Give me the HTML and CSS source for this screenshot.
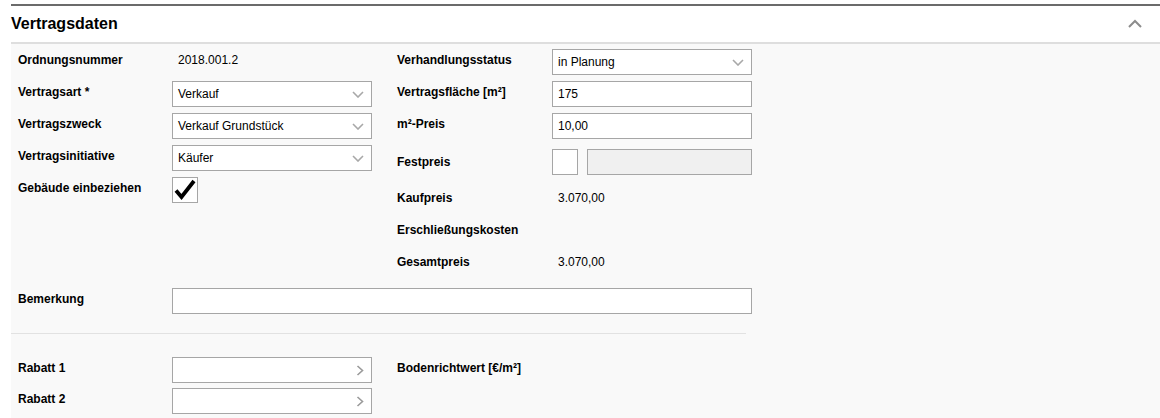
FILE: index.html
```html
<!DOCTYPE html>
<html lang="de">
<head>
    <meta charset="UTF-8">
    <meta name="viewport" content="width=device-width, initial-scale=1.0">
    <title>Vertragsdaten</title>
    <link rel="stylesheet" href="styles.css">
</head>
<body>
    <section class="panel">
        <header class="panel-head">
            <h2>Vertragsdaten</h2>
            <svg class="collapse" width="14" height="9" viewBox="0 0 14 9">
                <polyline points="1,8 7,2 13,8" fill="none" stroke="#8c8c8c" stroke-width="2"/>
            </svg>
        </header>
        <div class="panel-body">
            <div class="cols">
                <div class="col">
                    <div class="row">
                        <label>Ordnungsnummer</label>
                        <span class="value">2018.001.2</span>
                    </div>
                    <div class="row">
                        <label>Vertragsart *</label>
                        <div class="field select">
                            <span>Verkauf</span>
                            <svg width="12" height="7" viewBox="0 0 12 7"><polyline points="1,1 6,6 11,1" fill="none" stroke="#a8a8a8" stroke-width="1.6"/></svg>
                        </div>
                    </div>
                    <div class="row">
                        <label>Vertragszweck</label>
                        <div class="field select">
                            <span>Verkauf Grundstück</span>
                            <svg width="12" height="7" viewBox="0 0 12 7"><polyline points="1,1 6,6 11,1" fill="none" stroke="#a8a8a8" stroke-width="1.6"/></svg>
                        </div>
                    </div>
                    <div class="row">
                        <label>Vertragsinitiative</label>
                        <div class="field select">
                            <span>Käufer</span>
                            <svg width="12" height="7" viewBox="0 0 12 7"><polyline points="1,1 6,6 11,1" fill="none" stroke="#a8a8a8" stroke-width="1.6"/></svg>
                        </div>
                    </div>
                    <div class="row">
                        <label>Gebäude einbeziehen</label>
                        <div class="checkbox">
                            <svg width="26" height="26" viewBox="0 0 26 26"><polyline points="4,13.5 9.5,20 22,4" fill="none" stroke="#000" stroke-width="3.8"/></svg>
                        </div>
                    </div>
                </div>
                <div class="col">
                    <div class="row">
                        <label>Verhandlungsstatus</label>
                        <div class="field select">
                            <span>in Planung</span>
                            <svg width="12" height="7" viewBox="0 0 12 7"><polyline points="1,1 6,6 11,1" fill="none" stroke="#a8a8a8" stroke-width="1.6"/></svg>
                        </div>
                    </div>
                    <div class="row">
                        <label>Vertragsfläche [m²]</label>
                        <input class="field" type="text" value="175">
                    </div>
                    <div class="row">
                        <label>m²-Preis</label>
                        <input class="field" type="text" value="10,00">
                    </div>
                    <div class="row row-festpreis">
                        <label>Festpreis</label>
                        <div class="checkbox"></div>
                        <input class="field field-disabled" type="text" disabled>
                    </div>
                    <div class="row">
                        <label>Kaufpreis</label>
                        <span class="value">3.070,00</span>
                    </div>
                    <div class="row">
                        <label>Erschließungskosten</label>
                    </div>
                    <div class="row">
                        <label>Gesamtpreis</label>
                        <span class="value">3.070,00</span>
                    </div>
                </div>
            </div>
            <div class="row row-wide">
                <label>Bemerkung</label>
                <input class="field" type="text">
            </div>
            <hr class="divider">
            <div class="cols cols-tight">
                <div class="col">
                    <div class="row">
                        <label>Rabatt 1</label>
                        <div class="field select">
                            <span></span>
                            <svg width="8" height="11" viewBox="0 0 8 11"><polyline points="1.5,1 6.5,5.5 1.5,10" fill="none" stroke="#9a9a9a" stroke-width="1.6"/></svg>
                        </div>
                    </div>
                    <div class="row">
                        <label>Rabatt 2</label>
                        <div class="field select">
                            <span></span>
                            <svg width="8" height="11" viewBox="0 0 8 11"><polyline points="1.5,1 6.5,5.5 1.5,10" fill="none" stroke="#9a9a9a" stroke-width="1.6"/></svg>
                        </div>
                    </div>
                </div>
                <div class="col">
                    <div class="row">
                        <label>Bodenrichtwert [€/m²]</label>
                    </div>
                </div>
            </div>
        </div>
    </section>
</body>
</html>
```

FILE: styles.css
```css
body {
    margin: 0;
    padding: 4px 0 0 11px;
    background: #fff;
    font-family: "Liberation Sans", Arial, sans-serif;
    font-size: 12px;
    color: #000;
}
.panel {
    border-top: 2px solid #6b6b6b;
}
.panel-head {
    display: flex;
    align-items: center;
    justify-content: space-between;
    height: 36px;
    padding-right: 18px;
    background: #fff;
    border-bottom: 2px solid #dedede;
}
.panel-head h2 {
    margin: 0;
    font-size: 16px;
    font-weight: bold;
    line-height: 36px;
}
.collapse {
    margin-top: -2px;
}
.panel-body {
    background: #f9f9f9;
    padding: 5px 0 4px 7px;
    min-height: 370px;
}
.cols {
    display: flex;
    gap: 25px;
}
.row {
    display: flex;
    align-items: flex-start;
    height: 26px;
    margin-bottom: 6px;
}
.row label {
    width: 154px;
    flex: none;
    padding-top: 3px;
    line-height: 16px;
    font-weight: bold;
}
.col + .col .row label {
    width: 155px;
}
.value {
    padding-top: 3px;
    padding-left: 6px;
    line-height: 16px;
}
.field {
    box-sizing: border-box;
    width: 200px;
    height: 26px;
    margin: 0;
    padding: 0 5px;
    border: 1px solid #a6a6a6;
    background: #fff;
    font-family: inherit;
    font-size: 12px;
    color: #000;
    outline: none;
}
.select {
    display: flex;
    align-items: center;
    justify-content: space-between;
    padding-right: 7px;
}
.select svg {
    flex: none;
}
.checkbox {
    box-sizing: border-box;
    width: 26px;
    height: 26px;
    border: 1px solid #a6a6a6;
    background: #fff;
}
.checkbox svg {
    display: block;
    margin: -1px;
}
.row-festpreis {
    margin-top: 10px;
    margin-bottom: 12px;
}
.row-festpreis label {
    padding-top: 5px;
}
.row-festpreis .field-disabled {
    width: 165px;
    margin-left: 9px;
    background: #f0f0f0;
}
.row-wide {
    margin-top: 5px;
}
.row-wide .field {
    width: 580px;
}
.divider {
    margin: 19px 0 0 -7px;
    width: 735px;
    height: 0;
    border: none;
    border-top: 1px solid #e2e2e2;
}
.cols-tight {
    margin-top: 23px;
}
.cols-tight .row {
    margin-bottom: 5px;
}
```
